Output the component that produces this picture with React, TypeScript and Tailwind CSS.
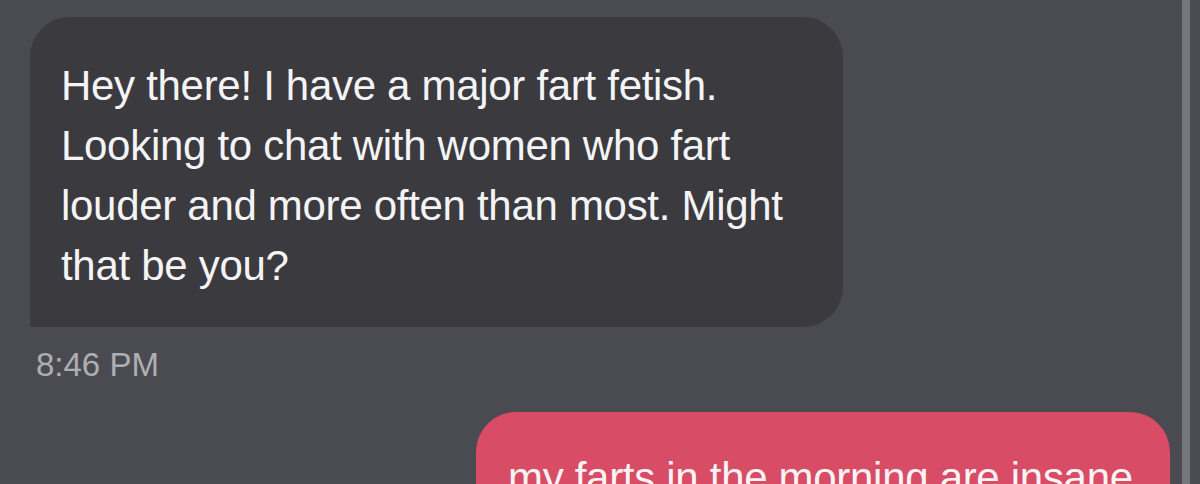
export default function App() {
  return (
    <div className="flex h-[484px] w-[1200px] overflow-hidden bg-[#4a4b50] font-['Liberation_Sans',Arial,sans-serif]">
      <div className="flex flex-1 flex-col pl-[30px] pr-[12px] pt-[17px]">
        <div className="w-[813px] rounded-[40px] rounded-bl-none bg-[#3a3a3f] pb-[31px] pl-[31px] pr-[20px] pt-[39px] text-[42px] leading-[60px] tracking-[-0.3px] text-[#f4f4f6]">
          Hey there! I have a major fart fetish. Looking to chat with women who fart louder and more often than most. Might that be you?
        </div>
        <div className="mt-[18px] pl-[6px] text-[33px] leading-[40px] text-[#aeaeb3]">8:46 PM</div>
        <div className="mt-[27px] w-[694px] self-end whitespace-nowrap rounded-[40px] bg-[#d84c66] pb-[30px] pl-[32px] pr-[20px] pt-[36px] text-[42px] leading-[60px] tracking-[-0.3px] text-[#f8f4f5]">
          my farts in the morning are insane
        </div>
      </div>
      <div className="w-[8px] bg-[#76777c]" />
      <div className="w-[10px]" />
    </div>
  )
}
